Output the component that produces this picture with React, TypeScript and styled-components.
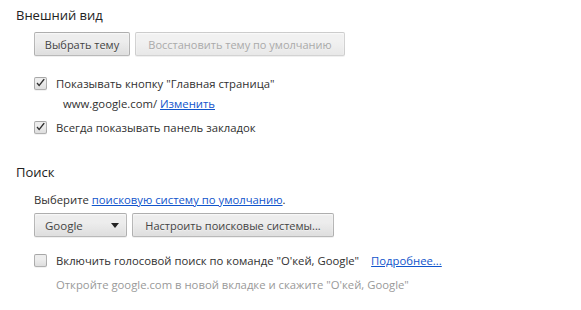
import styled, { createGlobalStyle } from "styled-components";

const GlobalStyle = createGlobalStyle`
  body {
    margin: 0;
    background: #ffffff;
    font-family: "Open Sans", "Noto Sans", "Liberation Sans", sans-serif;
    font-size: 11.3px;
    color: #303030;
  }
`;

const Page = styled.div`
  padding: 0 0 0 16px;
`;

const Section = styled.section<{ $top: number }>`
  margin-top: ${(p) => p.$top}px;
`;

const Title = styled.h3`
  margin: 0;
  height: 20px;
  line-height: 20px;
  font-size: 13px;
  font-weight: 400;
  color: #222;
`;

const Body = styled.div`
  padding-left: 18px;
`;

const Row = styled.div<{ $top: number; $h: number; $indent?: number }>`
  display: flex;
  align-items: center;
  gap: 5px;
  margin-top: ${(p) => p.$top}px;
  height: ${(p) => p.$h}px;
  padding-left: ${(p) => p.$indent ?? 0}px;
  white-space: nowrap;
`;

const Button = styled.button<{ $w: number }>`
  box-sizing: border-box;
  width: ${(p) => p.$w}px;
  height: 24px;
  padding: 0 8px;
  font-family: inherit;
  font-size: 11px;
  color: #444;
  background-image: linear-gradient(#ededed, #ededed 38%, #dedede);
  border: 1px solid rgba(0, 0, 0, 0.22);
  border-radius: 2px;
  box-shadow: 0 1px 0 rgba(0, 0, 0, 0.06), inset 0 1px 2px rgba(255, 255, 255, 0.75);
  text-shadow: 0 1px 0 #f0f0f0;

  &:disabled {
    color: #aaa;
    background-image: linear-gradient(#f1f1f1, #f1f1f1 38%, #e8e8e8);
    border-color: rgba(80, 80, 80, 0.18);
  }
`;

const Select = styled.div`
  box-sizing: border-box;
  width: 93px;
  height: 24px;
  display: flex;
  align-items: center;
  justify-content: space-between;
  padding: 0 7px 0 10px;
  font-size: 11.5px;
  color: #444;
  background-image: linear-gradient(#ededed, #ededed 38%, #dedede);
  border: 1px solid rgba(0, 0, 0, 0.22);
  border-radius: 2px;
  box-shadow: 0 1px 0 rgba(0, 0, 0, 0.06), inset 0 1px 2px rgba(255, 255, 255, 0.75);
`;

const Arrow = styled.span`
  width: 0;
  height: 0;
  border-left: 4px solid transparent;
  border-right: 4px solid transparent;
  border-top: 5px solid #222;
`;

const Box = styled.span`
  box-sizing: border-box;
  width: 13px;
  height: 13px;
  margin-right: 4px;
  flex: none;
  display: inline-flex;
  align-items: center;
  justify-content: center;
  background-image: linear-gradient(#ededed, #ededed 38%, #dedede);
  border: 1px solid rgba(0, 0, 0, 0.25);
  border-radius: 2px;
  box-shadow: 0 1px 0 rgba(0, 0, 0, 0.05);
`;

const Link = styled.a`
  color: #15c;
  text-decoration: underline;
  cursor: pointer;
`;

const Muted = styled.span`
  color: #999;
`;

const Spacer = styled.span`
  width: 2px;
`;

const Check = ({ on }: { on: boolean }) => (
  <Box>
    {on && (
      <svg width="11" height="11" viewBox="0 0 11 11">
        <path d="M1.5 5.5 L4.2 8.5 L9.8 1.5 L8.6 0.8 L4.1 6.6 L2.6 4.6 Z" fill="#303030" />
      </svg>
    )}
  </Box>
);

export default function App() {
  return (
    <>
      <GlobalStyle />
      <Page>
        <Section $top={5}>
          <Title>Внешний вид</Title>
          <Body>
            <Row $top={7} $h={24}>
              <Button $w={96}>Выбрать тему</Button>
              <Button $w={210} disabled>
                Восстановить тему по умолчанию
              </Button>
            </Row>
            <Row $top={16} $h={22}>
              <Check on />
              <span>Показывать кнопку "Главная страница"</span>
            </Row>
            <Row $top={1} $h={16} $indent={29}>
              <span>
                www.google.com/ <Link>Изменить</Link>
              </span>
            </Row>
            <Row $top={5} $h={22}>
              <Check on />
              <span>Всегда показывать панель закладок</span>
            </Row>
          </Body>
        </Section>
        <Section $top={24}>
          <Title>Поиск</Title>
          <Body>
            <Row $top={7} $h={20}>
              <span>
                Выберите <Link>поисковую систему по умолчанию</Link>.
              </span>
            </Row>
            <Row $top={4} $h={24}>
              <Select>
                Google
                <Arrow />
              </Select>
              <Button $w={202}>Настроить поисковые системы...</Button>
            </Row>
            <Row $top={12} $h={22}>
              <Check on={false} />
              <span>Включить голосовой поиск по команде "О'кей, Google"</span>
              <Spacer />
              <Link>Подробнее...</Link>
            </Row>
            <Row $top={3} $h={20} $indent={22}>
              <Muted>Откройте google.com в новой вкладке и скажите "О'кей, Google"</Muted>
            </Row>
          </Body>
        </Section>
      </Page>
    </>
  );
}
